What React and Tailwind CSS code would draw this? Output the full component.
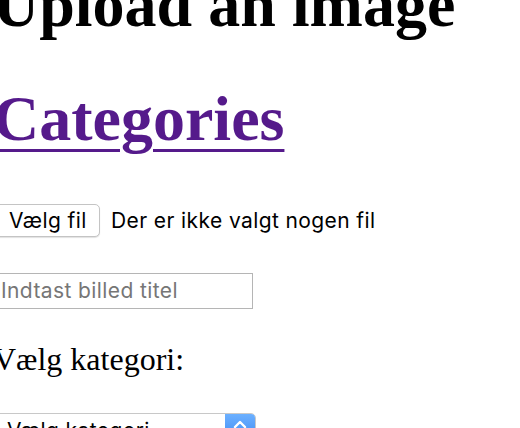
import React from "react";

export default function App() {
  const sans = "font-['Inter','Liberation_Sans',sans-serif] tracking-[0.4px]";
  return (
    <div className="w-[520px] h-[428px] overflow-hidden bg-white">
      <div className="-ml-[7px] -mt-[32px] font-['Liberation_Serif',serif] text-black">
        <h1 className="text-[64px] leading-[74px] font-bold whitespace-nowrap">Upload an image</h1>
        <h1 className="mt-[40px] text-[64px] leading-[74px] font-bold whitespace-nowrap">
          <a href="#" className="text-[#551a8b] underline decoration-[3px] underline-offset-[9px]">Categories</a>
        </h1>
        <div className={`mt-[48px] flex items-center ${sans}`}>
          <div className="w-[107px] h-[33px] rounded-[5px] border border-[#c4c4c4] bg-white shadow-[0_1px_1px_rgba(0,0,0,0.12)] flex items-center pl-[15px] text-[21px] text-black">
            Vælg fil
          </div>
          <span className="ml-[11px] text-[21px] text-black whitespace-nowrap">Der er ikke valgt nogen fil</span>
        </div>
        <div className={`mt-[36px] w-[260px] h-[36px] border border-[#b5b5b5] flex items-center pl-[7px] text-[21px] text-[#767676] ${sans}`}>
          Indtast billed titel
        </div>
        <div className="mt-[32px] text-[32px] leading-[37px] whitespace-nowrap">Vælg kategori:</div>
        <div className={`mt-[35px] w-[263px] h-[36px] rounded-[5px] border border-[#c8c8c8] flex overflow-hidden ${sans}`}>
          <div className="flex-1 pl-[13px] pt-[3px] text-[21px] text-black leading-[28px]">Vælg kategori</div>
          <div className="w-[30px] h-full bg-gradient-to-b from-[#6cb0ff] to-[#2f80f0] flex flex-col items-center pt-[5px]">
            <svg width="16" height="10" viewBox="0 0 16 10">
              <path d="M3 8 L8 3 L13 8" stroke="white" strokeWidth="2.4" fill="none" strokeLinecap="round" strokeLinejoin="round" />
            </svg>
          </div>
        </div>
      </div>
    </div>
  );
}
